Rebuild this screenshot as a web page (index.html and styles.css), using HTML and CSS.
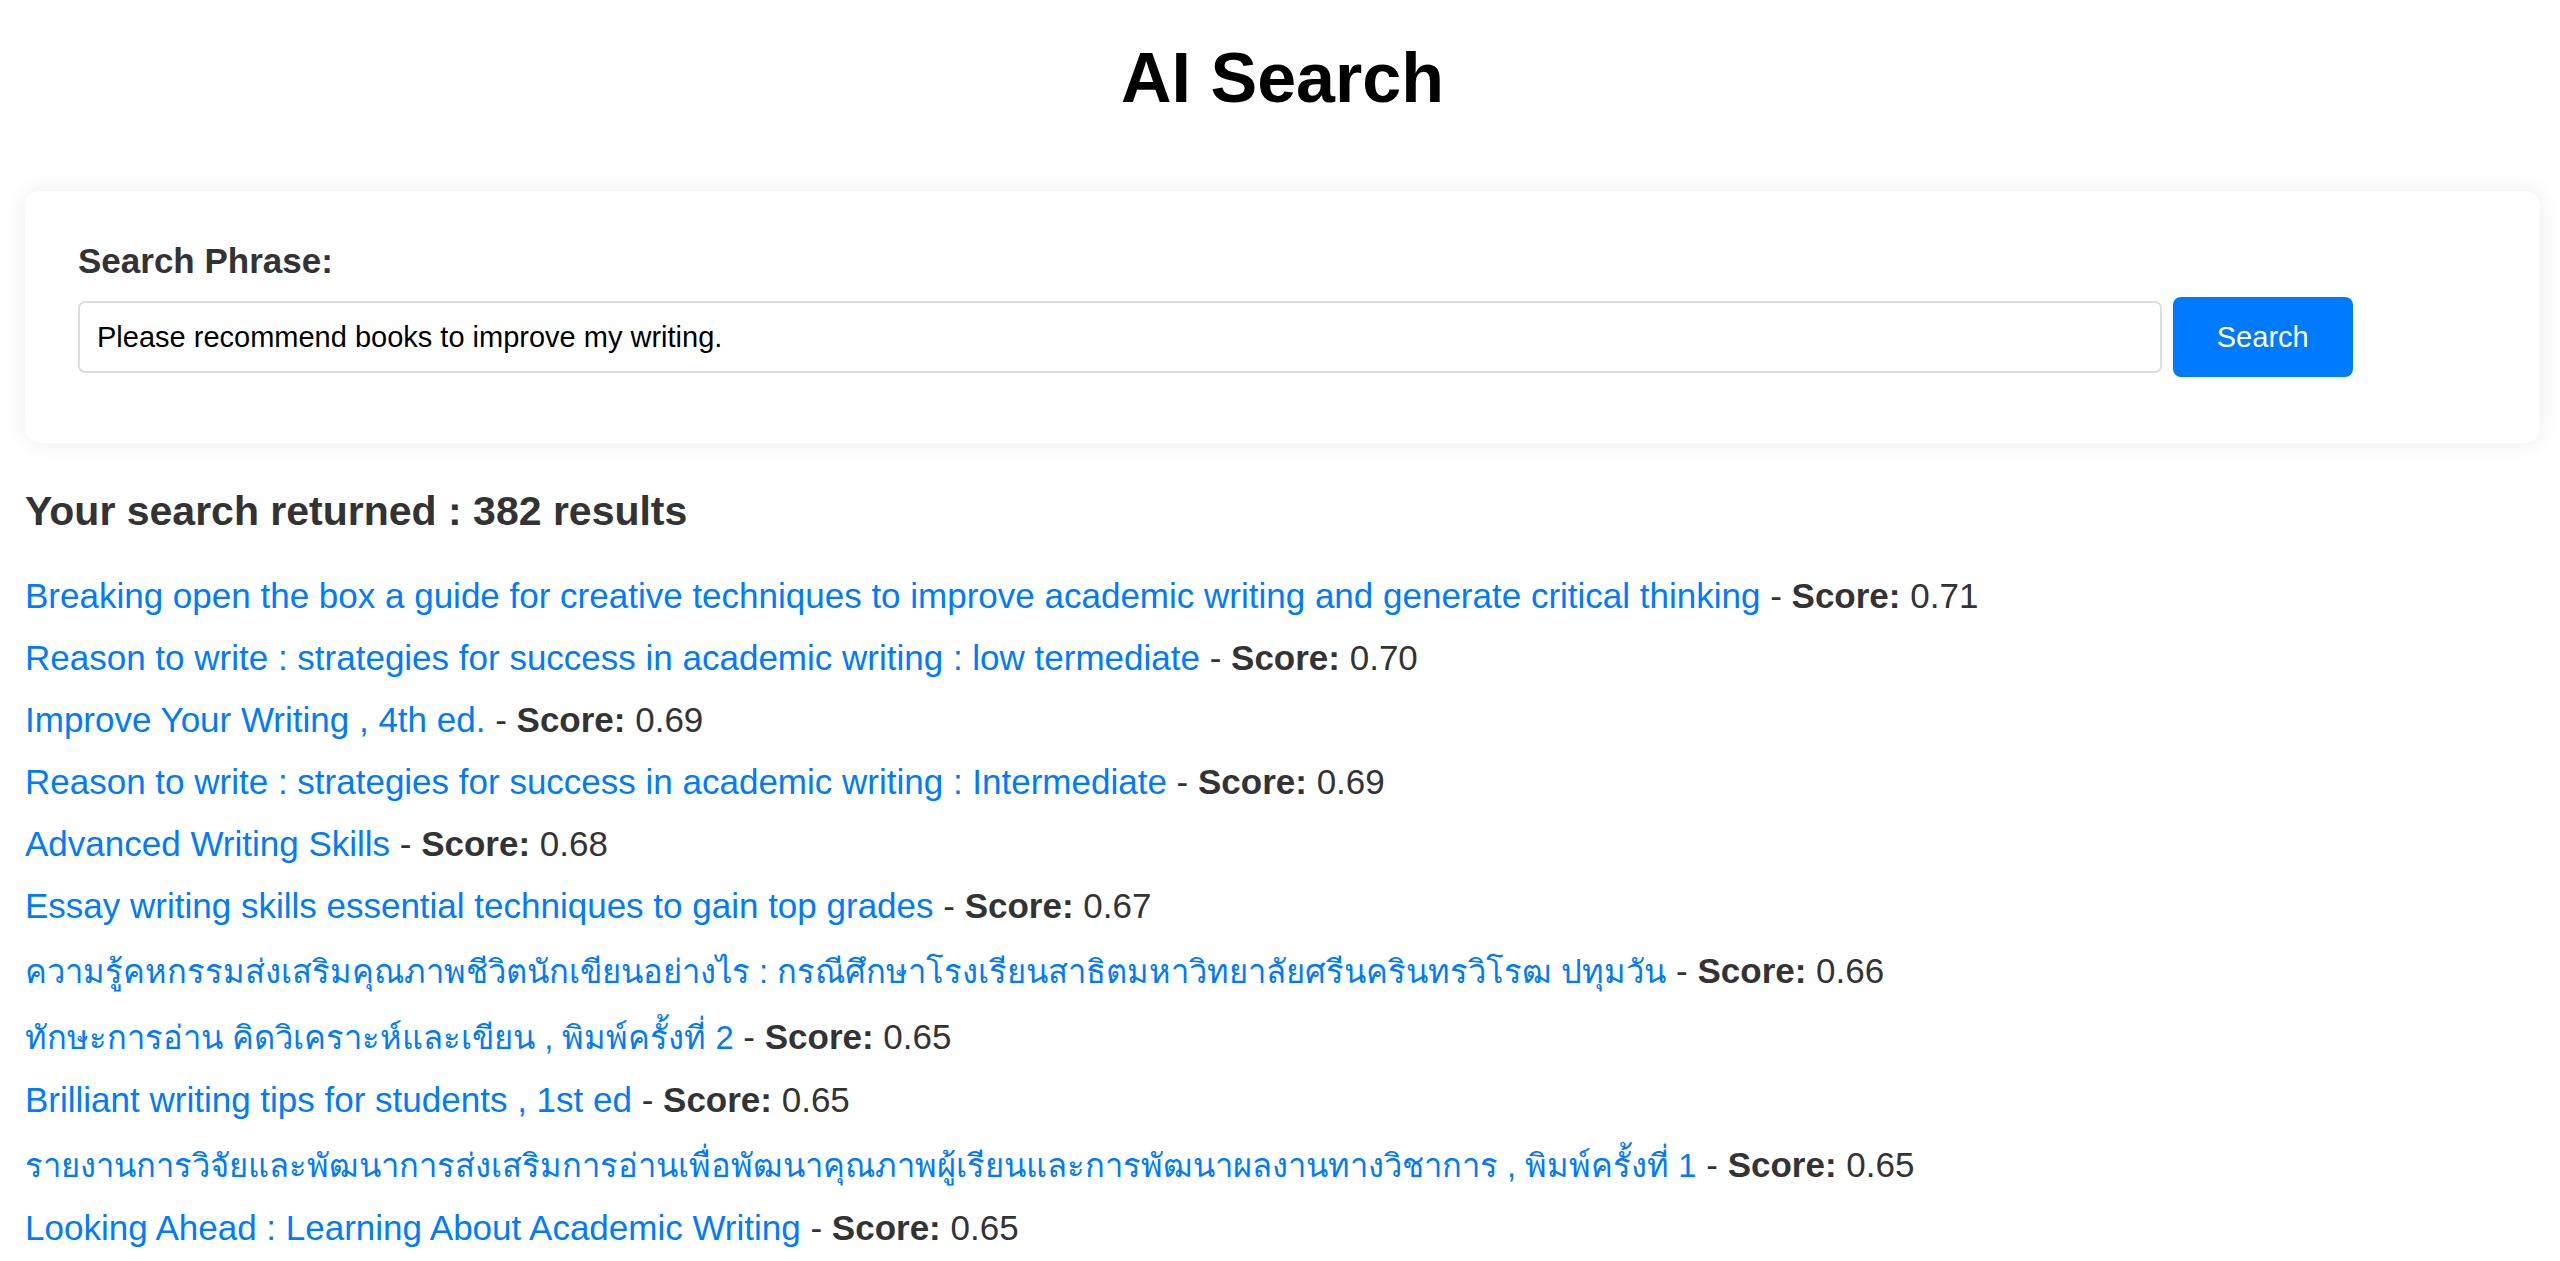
FILE: index.html
```html
<!DOCTYPE html>
<html lang="en">
  <head>
    <meta charset="UTF-8" />
    <meta name="viewport" content="width=device-width, initial-scale=1.0" />
    <title>AI Search</title>
    <link rel="stylesheet" href="styles.css">
  </head>
  <body>
    <h1 class="page-title">AI Search</h1>

    <form class="search-card" onsubmit="return false;">
      <label class="search-label" for="phrase">Search Phrase:</label>
      <div class="search-row">
        <input class="search-input" id="phrase" type="text" value="Please recommend books to improve my writing." />
        <button class="search-btn" type="submit">Search</button>
      </div>
    </form>

    <h2 class="result-count">Your search returned : 382 results</h2>

    <div class="results">
      <div class="result"><a href="#">Breaking open the box a guide for creative techniques to improve academic writing and generate critical thinking</a> - <b>Score:</b> 0.71</div>
      <div class="result"><a href="#">Reason to write : strategies for success in academic writing : low termediate</a> - <b>Score:</b> 0.70</div>
      <div class="result"><a href="#">Improve Your Writing , 4th ed.</a> - <b>Score:</b> 0.69</div>
      <div class="result"><a href="#">Reason to write : strategies for success in academic writing : Intermediate</a> - <b>Score:</b> 0.69</div>
      <div class="result"><a href="#">Advanced Writing Skills</a> - <b>Score:</b> 0.68</div>
      <div class="result"><a href="#">Essay writing skills essential techniques to gain top grades</a> - <b>Score:</b> 0.67</div>
      <div class="result th"><a href="#">ความรู้คหกรรมส่งเสริมคุณภาพชีวิตนักเขียนอย่างไร : กรณีศึกษาโรงเรียนสาธิตมหาวิทยาลัยศรีนครินทรวิโรฒ ปทุมวัน</a> - <b>Score:</b> 0.66</div>
      <div class="result th"><a href="#">ทักษะการอ่าน คิดวิเคราะห์และเขียน , พิมพ์ครั้งที่ 2</a> - <b>Score:</b> 0.65</div>
      <div class="result"><a href="#">Brilliant writing tips for students , 1st ed</a> - <b>Score:</b> 0.65</div>
      <div class="result th"><a href="#">รายงานการวิจัยและพัฒนาการส่งเสริมการอ่านเพื่อพัฒนาคุณภาพผู้เรียนและการพัฒนาผลงานทางวิชาการ , พิมพ์ครั้งที่ 1</a> - <b>Score:</b> 0.65</div>
      <div class="result"><a href="#">Looking Ahead : Learning About Academic Writing</a> - <b>Score:</b> 0.65</div>
    </div>
  </body>
</html>
```

FILE: styles.css
```css
body {
  margin: 0;
  padding: 0 20px 0 25px;
  background-color: #fff;
  color: #333;
  font-family: "Liberation Sans", Arial, sans-serif;
}
.page-title {
  margin: 38px 0 73px;
  font-size: 70px;
  color: #000;
  text-align: center;
}
.search-card {
  background-color: #fff;
  border-radius: 15px;
  box-shadow: 0 0 22px rgba(0, 0, 0, 0.08);
  padding: 50px 53px 66px;
}
.search-label {
  display: block;
  margin-bottom: 16px;
  font-size: 35px;
  font-weight: bold;
  color: #333;
}
.search-row {
  display: flex;
  align-items: center;
  gap: 11px;
}
.search-input {
  box-sizing: border-box;
  width: 86.5%;
  height: 72px;
  padding: 0 17px;
  border: 2px solid #ddd;
  border-radius: 7px;
  font-family: inherit;
  font-size: 29px;
  color: #000;
}
.search-btn {
  height: 80px;
  padding: 0 44px;
  border: none;
  border-radius: 8px;
  background-color: #007bff;
  color: #fff;
  font-family: inherit;
  font-size: 29px;
}
.result-count {
  margin: 45px 0 0;
  font-size: 41px;
  color: #333;
}
.results {
  display: flex;
  flex-direction: column;
  gap: 22px;
  margin-top: 41px;
}
.result {
  font-size: 35px;
  line-height: 40px;
  color: #333;
}
.result a {
  color: #007bff;
  text-decoration: none;
}
/* thai titles come out wider and taller in the fallback font */
.result.th {
  padding-top: 3px;
}
.result.th a {
  font-size: 32.7px;
}
```
